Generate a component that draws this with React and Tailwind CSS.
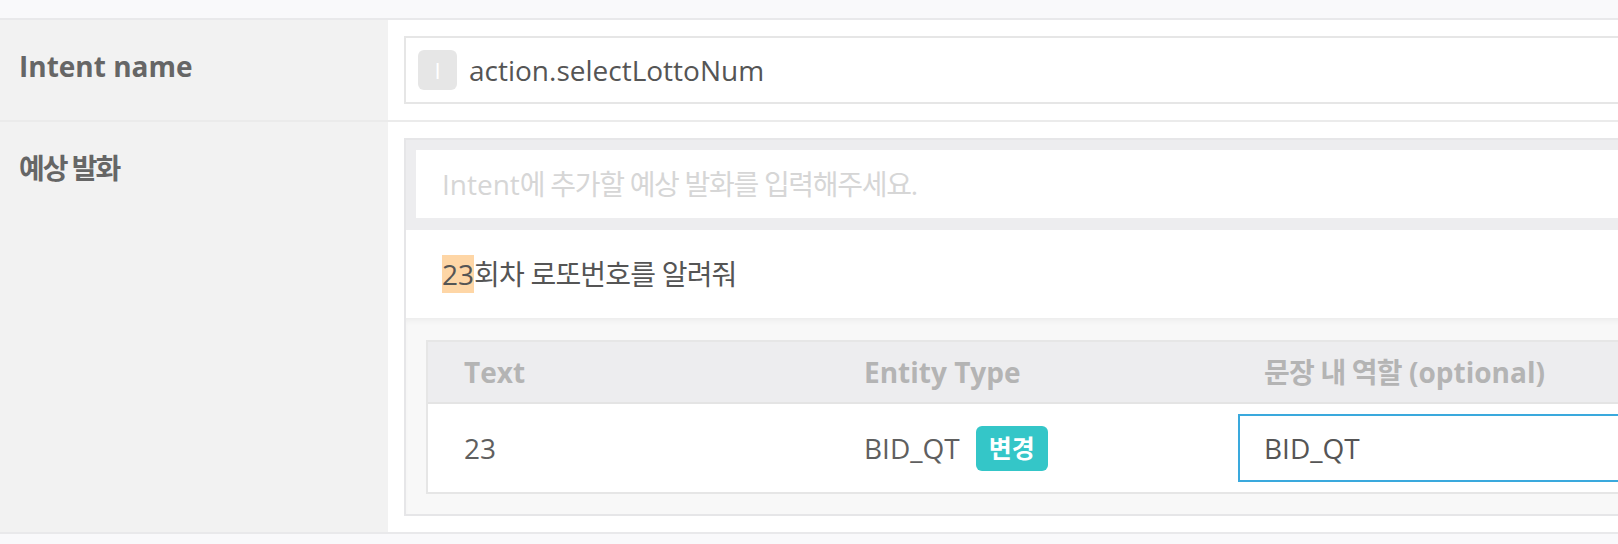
import React from 'react';

const Ko = ({ children, className = 'tracking-[-0.8px]' }) => <span className={className}>{children}</span>;

const Row = ({ label, children }) => (
  <div className="flex">
    <div className="w-[388px] shrink-0 bg-[#f2f2f2] pl-[19px] pt-[26px] text-[28px] leading-[40px] font-bold text-[#666]">
      {label}
    </div>
    <div className="flex-1 p-4">{children}</div>
  </div>
);

const App = () => {
  return (
    <div className="w-[1618px] h-[544px] overflow-hidden bg-[#f9f9fb] font-['Open_Sans','Noto_Sans_CJK_KR',sans-serif]">
      <div className="h-[18px]" />
      <div className="w-[1760px] bg-white border-y-2 border-[#e9e9eb]">
        <Row label="Intent name">
          <div className="h-[68px] border-2 border-[#e6e6e6] flex items-center pl-3 gap-3">
            <div className="w-[39px] h-10 rounded-md bg-[#e6e6e6] flex items-center justify-center text-white text-[22px] leading-none">
              I
            </div>
            <span className="text-[28px] text-[#555]">action.selectLottoNum</span>
          </div>
        </Row>
        <div className="h-[2px] bg-[#ebebeb]" />
        <Row label={<Ko className="tracking-[-2px]">예상 발화</Ko>}>
          <div className="border-2 border-[#e6e6e8] bg-[#ededef]">
            <div className="pt-[10px] pb-3 px-[10px]">
              <div className="h-[68px] bg-white flex items-center pl-[26px] text-[28px] text-[#d6d6d6]">
                Intent<Ko className="tracking-[-1.3px]">에 추가할 예상 발화를 입력해주세요.</Ko>
              </div>
            </div>
            <div className="h-[88px] bg-white flex items-center pl-9 text-[28px] text-[#555]">
              <span className="bg-[#fed6a6] leading-[38px]">23</span>
              <Ko>회차 로또번호를 알려줘</Ko>
            </div>
            <div className="bg-[#f8f8f8] pt-[22px] pb-5 pl-5 shadow-[inset_0_5px_6px_-3px_rgba(0,0,0,0.06)]">
              <div className="border-2 border-[#e6e6e6]">
                <div className="grid grid-cols-[400px_400px_1fr] h-[62px] items-center bg-[#ededef] border-b-2 border-[#e4e4e4] text-[28px] font-bold text-[#b4b4b4]">
                  <div className="pl-9">Text</div>
                  <div className="pl-9">Entity Type</div>
                  <div className="pl-9">
                    <Ko>문장 내 역할</Ko> (optional)
                  </div>
                </div>
                <div className="grid grid-cols-[400px_400px_1fr] h-[88px] items-center bg-white text-[28px] text-[#5f5f5f]">
                  <div className="pl-9">23</div>
                  <div className="pl-9 flex items-center gap-4">
                    <span>BID_QT</span>
                    <button
                      type="button"
                      className="w-[72px] h-[45px] rounded-md bg-[#34c6c8] text-white font-bold text-[25px] leading-none"
                    >
                      변경
                    </button>
                  </div>
                  <div className="pl-[10px]">
                    <div className="h-[68px] border-2 border-[#3aa9dd] flex items-center pl-6 text-[#555]">
                      BID_QT
                    </div>
                  </div>
                </div>
              </div>
            </div>
          </div>
        </Row>
      </div>
    </div>
  );
};

export default App;
